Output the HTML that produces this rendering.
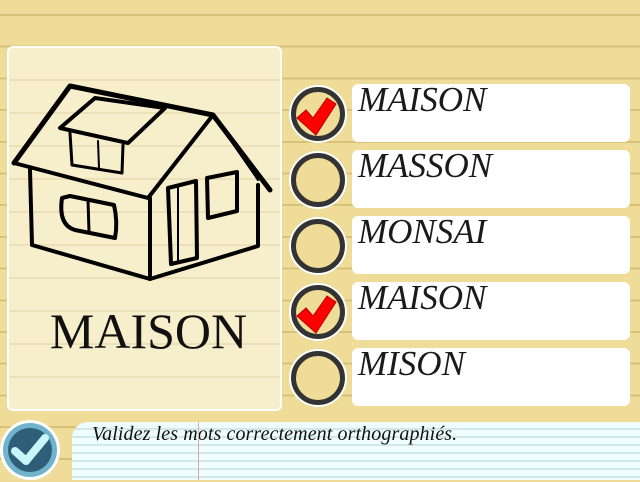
<!DOCTYPE html>
<html><head><meta charset="utf-8"><style>
*{margin:0;padding:0;box-sizing:border-box}
body{width:640px;height:480px;overflow:hidden;position:relative;
background:#eedc98 repeating-linear-gradient(to bottom,transparent 0,transparent 14px,#d8c27a 14px,#d8c27a 16px,transparent 16px,transparent 31.7px);}
.panel{position:absolute;left:7px;top:46px;width:275px;height:365px;border:2px solid #fff;border-radius:6px;
background:#f7eecb repeating-linear-gradient(to bottom,transparent 0,transparent 31px,#ece0b8 31px,#ece0b8 33px,transparent 33px,transparent 31.7px);}
.word{position:absolute;left:4px;width:271px;top:254px;text-align:center;font:50px "Liberation Serif",serif;color:#111}
.box{position:absolute;left:352px;width:278px;height:58px;background:#fff;border-radius:6px;
font:italic 35px "Liberation Serif",serif;color:#1a1a1a;padding-left:6px;line-height:32px}
.c{position:absolute;left:289px;width:58px;height:58px;border-radius:50%;background:#fff;}
.c i{position:absolute;left:2px;top:2px;width:54px;height:54px;border-radius:50%;border:5px solid #333;background:#eedc98}
.c svg{position:absolute;left:0;top:0}
.note{position:absolute;left:72px;top:422px;width:568px;height:58px;border-top-left-radius:16px;overflow:hidden;
background:#effdfd repeating-linear-gradient(to bottom,transparent 0,transparent 6px,#d3e8ea 6px,#d3e8ea 8px);}
.note:after{content:"";position:absolute;left:126px;top:0;width:1px;height:58px;background:#e8a8a8}
.note span{position:absolute;left:20px;top:1px;font:italic 20px "Liberation Serif",serif;color:#111;letter-spacing:0.1px}
</style></head><body>
<div class="panel">
<svg width="290" height="300" style="position:absolute;left:-9px;top:-48px">
<g fill="none" stroke="#000" stroke-linecap="round" stroke-linejoin="round">
<path d="M14 163 L70 86 L213 115 L270 190" stroke-width="5"/>
<path d="M14 163 L148 198 L213 115" stroke-width="4"/>
<path d="M213 115 L258 180" stroke-width="2"/>
<path d="M60 128 L128 143 L165 108 L95 98 Z" stroke-width="4"/>
<path d="M70 133 L72 165 L122 173 L123 145" stroke-width="3"/>
<path d="M98 141 L99 168" stroke-width="2"/>
<path d="M30 170 L32 245 L150 279 L258 246 L258 185" stroke-width="4"/>
<path d="M150 198 L150 279" stroke-width="4"/>
<path d="M62 198 Q58 225 75 230 L115 238 Q118 222 114 205 L70 196 Z" stroke-width="4"/>
<path d="M88 200 L89 232" stroke-width="3"/>
<path d="M168 188 L196 181 L197 258 L171 264 Z" stroke-width="4"/>
<path d="M178 186 L178 262" stroke-width="2"/>
<path d="M207 178 L237 172 L237 211 L208 218 Z" stroke-width="4"/>
</g></svg>
<div class="word">MAISON</div>
</div>

<div class="c" style="top:85px"><i></i><svg width="58" height="58"><path d="M8 33 L17 25 L24 33 L38 13 L47 19 L27 50 Z" fill="#f00" stroke="#b00" stroke-width="1"/></svg></div>
<div class="box" style="top:84px">MAISON</div>
<div class="c" style="top:151px"><i></i></div>
<div class="box" style="top:150px">MASSON</div>
<div class="c" style="top:217px"><i></i></div>
<div class="box" style="top:216px">MONSAI</div>
<div class="c" style="top:283px"><i></i><svg width="58" height="58"><path d="M8 33 L17 25 L24 33 L38 13 L47 19 L27 50 Z" fill="#f00" stroke="#b00" stroke-width="1"/></svg></div>
<div class="box" style="top:282px">MAISON</div>
<div class="c" style="top:349px"><i></i></div>
<div class="box" style="top:348px">MISON</div>

<div class="note"><span>Validez les mots correctement orthographiés.</span></div>
<svg width="62" height="62" style="position:absolute;left:0;top:420px"><circle cx="30" cy="30" r="30" fill="#fff"/><circle cx="30" cy="30" r="27" fill="#6fb4cc"/><circle cx="30" cy="30" r="22" fill="#2f5f78"/><path d="M15 31 L26 41 L45 18" fill="none" stroke="#c8f6fa" stroke-width="8" stroke-linecap="round" stroke-linejoin="round"/></svg>
</body></html>
